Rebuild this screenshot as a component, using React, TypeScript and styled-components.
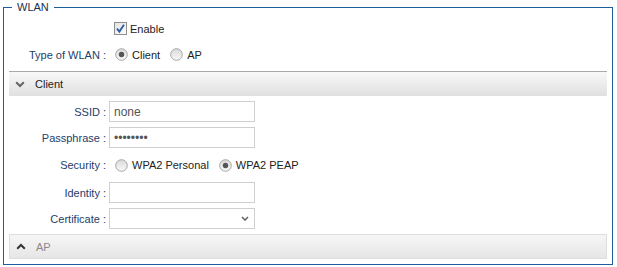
import React, { useId } from 'react';
import styled, { createGlobalStyle } from 'styled-components';

const GlobalStyle = createGlobalStyle`
  html, body {
    margin: 0;
    background: #fff;
  }
  body {
    font-family: "Liberation Sans", Arial, sans-serif;
    font-size: 11px;
    color: #222;
  }
`;

const Page = styled.div`
  padding: 0 4px 0 3px;
`;

const Fieldset = styled.fieldset`
  margin: 0;
  padding: 4px 5px 5px;
  border: 1px solid #1c5d9e;
  min-width: 0;
`;

const Legend = styled.legend`
  margin-left: 3px;
  padding: 0 5px;
  line-height: 14px;
  color: #1b2f52;
`;

const Row = styled.div<{ $h?: number }>`
  display: grid;
  grid-template-columns: 97px 1fr;
  column-gap: 3px;
  align-items: center;
  height: ${(p) => p.$h ?? 21}px;

  & + & {
    margin-top: 5px;
  }
`;

const Label = styled.div`
  text-align: right;
  white-space: nowrap;
  color: #24406b;
`;

const Choices = styled.div`
  display: flex;
  align-items: center;
  padding-left: 6px;
`;

const Option = styled.label<{ $gap?: number; $shift?: number }>`
  display: inline-flex;
  align-items: center;
  gap: ${(p) => p.$gap ?? 4}px;
  margin-left: ${(p) => p.$shift ?? 0}px;
  color: #222;
  white-space: nowrap;

  & + & {
    margin-left: 10px;
  }
`;

const SectionHead = styled.div<{ $open: boolean }>`
  display: flex;
  align-items: center;
  gap: 10px;
  box-sizing: border-box;
  height: 25px;
  padding-left: 6px;
  ${(p) =>
    p.$open
      ? `
    border-top: 1px solid #a9a9a9;
    background: linear-gradient(#f8f8f8, #e0e0e0);
    color: #222;
  `
      : `
    border: 1px solid #dedede;
    background: linear-gradient(#f6f6f6, #e6e6e6);
    color: #8a8a8a;
  `}
`;

const SectionBody = styled.div`
  padding: 5px 0;
`;

const TextInput = styled.input`
  box-sizing: border-box;
  width: 146px;
  height: 21px;
  margin: 0;
  padding: 0 4px;
  border: 1px solid #cfcfcf;
  border-radius: 0;
  font: 12px "Liberation Sans", Arial, sans-serif;
  color: #555;
  outline: none;
  background: #fff;
`;

const SelectBox = styled.div`
  display: grid;
  width: 146px;
  height: 21px;
  align-items: center;

  & > * {
    grid-area: 1 / 1;
  }
`;

const Select = styled.select`
  box-sizing: border-box;
  width: 146px;
  height: 21px;
  margin: 0;
  padding: 0 4px;
  border: 1px solid #cfcfcf;
  border-radius: 0;
  background: #fff;
  appearance: none;
  font: 12px "Liberation Sans", Arial, sans-serif;
  color: #555;
  outline: none;
`;

const SelectArrow = styled.svg`
  justify-self: end;
  margin-right: 6px;
  pointer-events: none;
`;

const Radio = ({ checked }: { checked?: boolean }) => {
  const id = useId();
  return (
    <svg width="13" height="13" viewBox="0 0 13 13">
      <defs>
        <linearGradient id={id} x1="0" y1="0" x2="0" y2="1">
          <stop offset="0" stopColor="#d9d9d9" />
          <stop offset="1" stopColor="#fafafa" />
        </linearGradient>
      </defs>
      <circle cx="6.5" cy="6.5" r="5.8" fill={`url(#${id})`} stroke="#a6a6a6" />
      {checked && <circle cx="6.5" cy="6.5" r="2.7" fill="#555" />}
    </svg>
  );
};

const Checkbox = () => {
  const id = useId();
  return (
    <svg width="13" height="13" viewBox="0 0 13 13">
      <defs>
        <linearGradient id={id} x1="0" y1="0" x2="1" y2="1">
          <stop offset="0" stopColor="#e2e2e2" />
          <stop offset="1" stopColor="#fdfdfd" />
        </linearGradient>
      </defs>
      <rect x="0.5" y="0.5" width="12" height="12" fill={`url(#${id})`} stroke="#8e8e8e" />
      <path d="M3 6.6 L5.4 9.6 L10 2.8" fill="none" stroke="#2f5ea4" strokeWidth="1.9" />
    </svg>
  );
};

const Chevron = ({ up }: { up?: boolean }) => (
  <svg width="10" height="7" viewBox="0 0 10 7">
    <path
      d={up ? 'M1.2 5.8 L5 2 L8.8 5.8' : 'M1.2 1.2 L5 5 L8.8 1.2'}
      fill="none"
      stroke={up ? '#333' : '#666'}
      strokeWidth="2"
    />
  </svg>
);

export default function App() {
  return (
    <Page>
      <GlobalStyle />
      <Fieldset>
        <Legend>WLAN</Legend>

        <Row>
          <Label />
          <Choices>
            <Option $gap={3} $shift={-1}>
              <Checkbox />
              Enable
            </Option>
          </Choices>
        </Row>
        <Row style={{ marginBottom: 6 }}>
          <Label>Type of WLAN :</Label>
          <Choices>
            <Option>
              <Radio checked />
              Client
            </Option>
            <Option>
              <Radio />
              AP
            </Option>
          </Choices>
        </Row>

        <SectionHead $open>
          <Chevron />
          Client
        </SectionHead>
        <SectionBody>
          <Row>
            <Label>SSID :</Label>
            <TextInput defaultValue="none" />
          </Row>
          <Row>
            <Label>Passphrase :</Label>
            <TextInput type="password" defaultValue="password" />
          </Row>
          <Row $h={24}>
            <Label>Security :</Label>
            <Choices>
              <Option>
                <Radio />
                WPA2 Personal
              </Option>
              <Option>
                <Radio checked />
                WPA2 PEAP
              </Option>
            </Choices>
          </Row>
          <Row>
            <Label>Identity :</Label>
            <TextInput />
          </Row>
          <Row>
            <Label>Certificate :</Label>
            <SelectBox>
              <Select defaultValue="">
                <option value=""></option>
              </Select>
              <SelectArrow width="8" height="5" viewBox="0 0 8 5">
                <path d="M1 1 L4 4 L7 1" fill="none" stroke="#666" strokeWidth="1.6" />
              </SelectArrow>
            </SelectBox>
          </Row>
        </SectionBody>

        <SectionHead $open={false}>
          <Chevron up />
          AP
        </SectionHead>
      </Fieldset>
    </Page>
  );
}
